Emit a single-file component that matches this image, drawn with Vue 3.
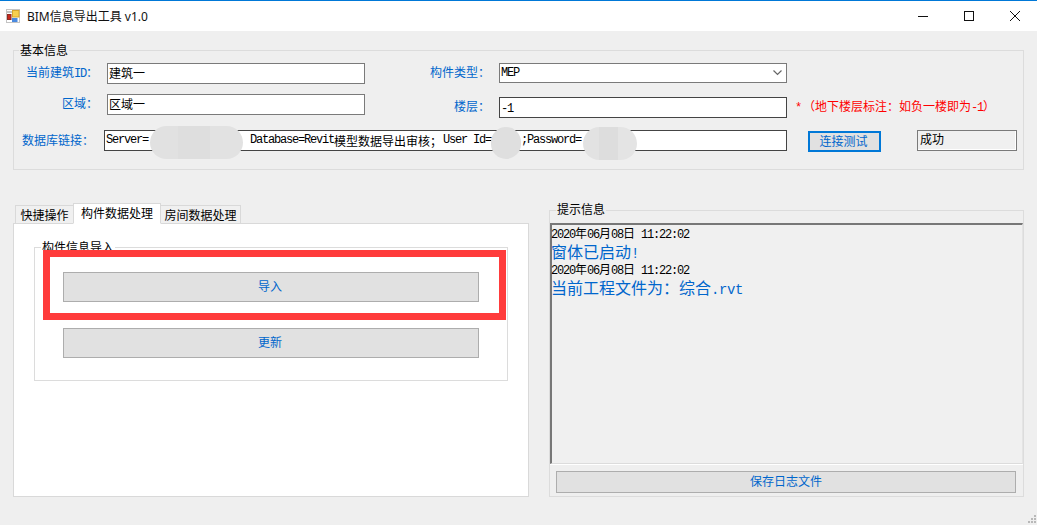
<script setup>
const logs = [
  { time: ['2020', '年', '06', '月', '08', '日', ' 11:22:02'], msg: '窗体已启动', tail: '!' },
  { time: ['2020', '年', '06', '月', '08', '日', ' 11:22:02'], msg: '当前工程文件为：综合', tail: '.rvt' }
]
</script>

<template>
  <div class="window">
    <div class="titlebar">
      <svg class="app-icon" width="14" height="14" viewBox="0 0 14 14">
        <rect x="0.5" y="0.5" width="13" height="13" fill="#fff" stroke="#c4c4c4" />
        <rect x="0" y="2" width="6" height="2" fill="#c4c4c4" />
        <rect x="6.5" y="1.5" width="6.5" height="6.5" fill="#f7cf4f" stroke="#d9a62e" />
        <rect x="1.5" y="5.5" width="3.5" height="5" fill="#c8281e" stroke="#8f2a22" />
        <rect x="6" y="9" width="5.5" height="4" fill="#4a8ae0" />
      </svg>
      <span class="app-title">BIM信息导出工具 v1.0</span>
      <div class="win-btns">
        <div class="win-btn"><svg width="10" height="10"><path d="M0 5.5H10" stroke="#111" /></svg></div>
        <div class="win-btn"><svg width="10" height="10"><rect x="0.5" y="0.5" width="9" height="9" fill="none" stroke="#111" /></svg></div>
        <div class="win-btn"><svg width="10" height="10"><path d="M0 0L10 10M10 0L0 10" stroke="#111" /></svg></div>
      </div>
    </div>

    <div class="client">
      <section class="info-group">
        <span class="legend info-legend">基本信息</span>

        <div class="row row-1">
          <label class="lbl lbl-a">当前建筑<span class="l">ID</span>：</label>
          <div class="field field-a">建筑一</div>
          <label class="lbl lbl-b">构件类型：</label>
          <div class="field field-b combo">
            <span class="l">MEP</span>
            <svg class="chevron" width="9" height="6" viewBox="0 0 9 6"><path d="M0.5 0.5L4.5 4.5L8.5 0.5" fill="none" stroke="#666" stroke-width="1.2" /></svg>
          </div>
        </div>

        <div class="row row-2">
          <label class="lbl lbl-a">区域：</label>
          <div class="field field-a">区域一</div>
          <label class="lbl lbl-b floor-lbl">楼层：</label>
          <div class="field field-b floor dark"><span class="l">-1</span></div>
          <span class="hint"><span class="l">*</span><span class="paren">（</span>地下楼层标注：如负一楼即为<span class="l">-1</span>）</span>
        </div>

        <div class="row row-3">
          <label class="lbl lbl-c">数据库链接：</label>
          <div class="field field-c dark">
            <span class="l">Server=</span>
            <span class="conn-gap"></span>
            <span class="l">Database=Revit</span>
            <span class="conn-cn">模型数据导出审核；</span>
            <span class="l">User Id=</span>
            <span class="conn-gap-2"></span>
            <span class="l">;Password=</span>
            <i class="smudge smudge-1"></i>
            <i class="smudge smudge-2"></i>
            <i class="smudge smudge-3"></i>
          </div>
          <button class="test-btn">连接测试</button>
          <div class="status">成功</div>
        </div>
      </section>

      <div class="panels">
        <div class="left-panel">
          <div class="tabs">
            <div class="tab tab-1">快捷操作</div>
            <div class="tab tab-2 active">构件数据处理</div>
            <div class="tab tab-3">房间数据处理</div>
          </div>
          <div class="tab-pane">
            <section class="import-group">
              <span class="legend import-legend">构件信息导入</span>
              <button class="wide-btn">导入</button>
              <button class="wide-btn">更新</button>
              <div class="red-box"></div>
            </section>
          </div>
        </div>

        <section class="log-group">
          <span class="legend log-legend">提示信息</span>
          <div class="log-box">
            <template v-for="(item, i) in logs" :key="i">
              <div class="log-time">
                <template v-for="(part, j) in item.time" :key="j">
                  <span v-if="j % 2 === 0 || j === 6" class="l">{{ part }}</span>
                  <template v-else>{{ part }}</template>
                </template>
              </div>
              <div class="log-msg">{{ item.msg }}<span class="l-big">{{ item.tail }}</span></div>
            </template>
          </div>
          <button class="save-btn">保存日志文件</button>
        </section>
      </div>

      <svg class="grip" width="10" height="10" viewBox="0 0 10 10">
        <rect x="7" y="0" width="2" height="2" fill="#b8b8b8" />
        <rect x="4" y="3" width="2" height="2" fill="#b8b8b8" />
        <rect x="7" y="3" width="2" height="2" fill="#b8b8b8" />
        <rect x="1" y="6" width="2" height="2" fill="#b8b8b8" />
        <rect x="4" y="6" width="2" height="2" fill="#b8b8b8" />
        <rect x="7" y="6" width="2" height="2" fill="#b8b8b8" />
      </svg>
    </div>
  </div>
</template>

<style scoped>
.window {
  width: 1037px;
  height: 525px;
  overflow: hidden;
  display: flex;
  flex-direction: column;
  background: #efefef;
  font-family: "Noto Sans CJK SC", "Liberation Sans", sans-serif;
  font-size: 12px;
  color: #000;
}

.l {
  font-family: "Liberation Mono", monospace;
  font-size: 12px;
  letter-spacing: -1.2px;
  white-space: pre;
}

.l-big {
  font-family: "Liberation Mono", monospace;
  font-size: 14px;
  letter-spacing: -0.4px;
}

/* title bar */
.titlebar {
  height: 31px;
  flex: none;
  box-sizing: border-box;
  border-top: 1px solid #0078d7;
  background: #fff;
  display: flex;
  align-items: center;
  padding-left: 6px;
}

.app-icon {
  margin: -1px 7px 0 0;
}

.app-title {
  font-family: "Noto Sans", "Noto Sans CJK SC", sans-serif;
  font-size: 12px;
  color: #111;
}

.win-btns {
  margin-left: auto;
  margin-right: -1px;
  display: flex;
}

.win-btn {
  width: 46px;
  height: 30px;
  display: flex;
  align-items: center;
  justify-content: center;
}

/* client area */
.client {
  flex: 1;
  position: relative;
  padding: 19px 13px 0;
}

.legend {
  position: absolute;
  line-height: 14px;
  padding: 0 1px;
}

.info-group {
  position: relative;
  width: 1011px;
  height: 120px;
  box-sizing: border-box;
  border: 1px solid #dcdcdc;
  padding-top: 12px;
}

.info-legend {
  left: 5px;
  top: -8px;
  background: #efefef;
}

.row {
  display: flex;
  align-items: flex-start;
}

.row-1 {
  height: 21px;
}

.row-2 {
  height: 24px;
  margin-top: 10px;
}

.row-3 {
  height: 21px;
  margin-top: 12px;
}

.lbl {
  color: #0066cc;
  text-align: right;
  line-height: 18px;
  white-space: nowrap;
}

.lbl-a {
  width: 84px;
  margin-right: 9px;
}

.lbl-b {
  width: 125px;
  margin-right: 9px;
}

.lbl-c {
  width: 80px;
  margin-right: 10px;
  line-height: 20px;
}

.floor-lbl {
  margin-top: 3px;
}

.field {
  box-sizing: border-box;
  height: 21px;
  border: 1px solid #7a7a7a;
  background: #fff;
  padding-left: 1px;
  line-height: 17px;
  white-space: nowrap;
}

.dark {
  border-color: #444;
}

.field-a {
  width: 258px;
}

.field-b {
  width: 288px;
}

.combo {
  height: 20px;
  display: flex;
  align-items: center;
  justify-content: space-between;
  padding-right: 3px;
}

.chevron {
  margin-right: 1px;
}

.floor {
  margin-top: 3px;
}

.hint {
  margin: 3px 0 0 8px;
  color: #f00;
  line-height: 18px;
  white-space: nowrap;
}

.paren {
  display: inline-block;
  width: 14px;
  text-align: right;
}

.field-c {
  position: relative;
  width: 683px;
  display: flex;
  align-items: center;
}

.conn-gap {
  width: 102px;
}

.conn-cn {
  margin-right: 1px;
}

.conn-gap-2 {
  width: 30px;
}

.smudge {
  position: absolute;
}

.smudge-1 {
  left: 45px;
  top: -5px;
  width: 93px;
  height: 33px;
  border-radius: 17px;
  background: linear-gradient(90deg, #e1e1e1 0 30%, #dedede 30% 65%, #e2e2e2 65% 100%);
}

.smudge-2 {
  left: 386px;
  top: -4px;
  width: 30px;
  height: 32px;
  border-radius: 15px;
  background: #dfdfdf;
}

.smudge-3 {
  left: 478px;
  top: -4px;
  width: 54px;
  height: 33px;
  border-radius: 17px;
  background: linear-gradient(90deg, #e2e2e2 0 30%, #dddddd 30% 65%, #e4e4e4 65% 100%);
}

.test-btn {
  box-sizing: border-box;
  width: 73px;
  height: 21px;
  margin: 1px 0 0 21px;
  padding: 0 2px 2px 0;
  border: 2px solid #0078d7;
  background: #e1e1e1;
  color: #0066cc;
  font: inherit;
  line-height: 13px;
}

.status {
  box-sizing: border-box;
  width: 100px;
  height: 21px;
  margin-left: 36px;
  padding-left: 2px;
  border: 1px solid #7a7a7a;
  box-shadow: inset -1px -1px 0 #fff;
  background: #f0f0f0;
  line-height: 16px;
}

/* lower panels */
.panels {
  display: flex;
  align-items: flex-start;
  margin-top: 33px;
}

.left-panel {
  width: 516px;
  margin-right: 20px;
}

.tabs {
  display: flex;
  align-items: flex-end;
  height: 21px;
  padding-left: 2px;
  position: relative;
  z-index: 1;
  margin-bottom: -1px;
}

.tab {
  box-sizing: border-box;
  height: 19px;
  border: 1px solid #d9d9d9;
  border-bottom: 1px solid #d9d9d9;
  background: #f0f0f0;
  text-align: center;
  line-height: 18px;
}

.tab-1 {
  width: 58px;
  border-right: none;
}

.tab-2 {
  width: 88px;
}

.tab-3 {
  width: 80px;
  border-left: none;
}

.tab.active {
  height: 21px;
  background: #fff;
  border-bottom-color: #fff;
  line-height: 17px;
}

.tab-pane {
  box-sizing: border-box;
  height: 274px;
  border: 1px solid #d9d9d9;
  background: #fff;
  padding: 23px 0 0 20px;
}

.import-group {
  position: relative;
  box-sizing: border-box;
  width: 474px;
  height: 134px;
  border: 1px solid #dcdcdc;
  padding: 24px 0 0 28px;
}

.import-legend {
  left: 6px;
  top: -8px;
  background: #fff;
}

.wide-btn {
  display: block;
  box-sizing: border-box;
  width: 416px;
  height: 30px;
  padding: 0 2px 4px 0;
  border: 1px solid #adadad;
  background: #e1e1e1;
  color: #0066cc;
  font: inherit;
}

.wide-btn + .wide-btn {
  margin-top: 26px;
}

.red-box {
  position: absolute;
  left: 8px;
  top: 2px;
  width: 463px;
  height: 70px;
  box-sizing: border-box;
  border: 7px solid #ff3b3b;
}

.log-group {
  position: relative;
  box-sizing: border-box;
  width: 475px;
  height: 287px;
  margin-top: 7px;
  border: 1px solid #dcdcdc;
  padding-top: 12px;
}

.log-legend {
  left: 6px;
  top: -9px;
  background: #efefef;
}

.log-box {
  box-sizing: border-box;
  height: 241px;
  border-top: 2px solid #777;
  border-left: 2px solid #777;
  border-right: 1px solid #e4e4e4;
  border-bottom: 1px solid #dcdcdc;
  box-shadow: 0 1px 0 #fff;
  background: #f0f0f0;
}

.log-time {
  height: 16px;
  margin-left: -1px;
  line-height: 16px;
  white-space: pre;
}

.log-msg {
  height: 20px;
  margin-left: -1px;
  line-height: 20px;
  font-size: 16px;
  color: #0066cc;
}

.save-btn {
  display: block;
  box-sizing: border-box;
  width: 460px;
  height: 22px;
  margin: 7px 0 0 6px;
  padding: 0 0 3px;
  border: 1px solid #adadad;
  background: #e1e1e1;
  color: #0066cc;
  font: inherit;
}

.grip {
  position: absolute;
  right: 0;
  bottom: 0;
}
</style>
